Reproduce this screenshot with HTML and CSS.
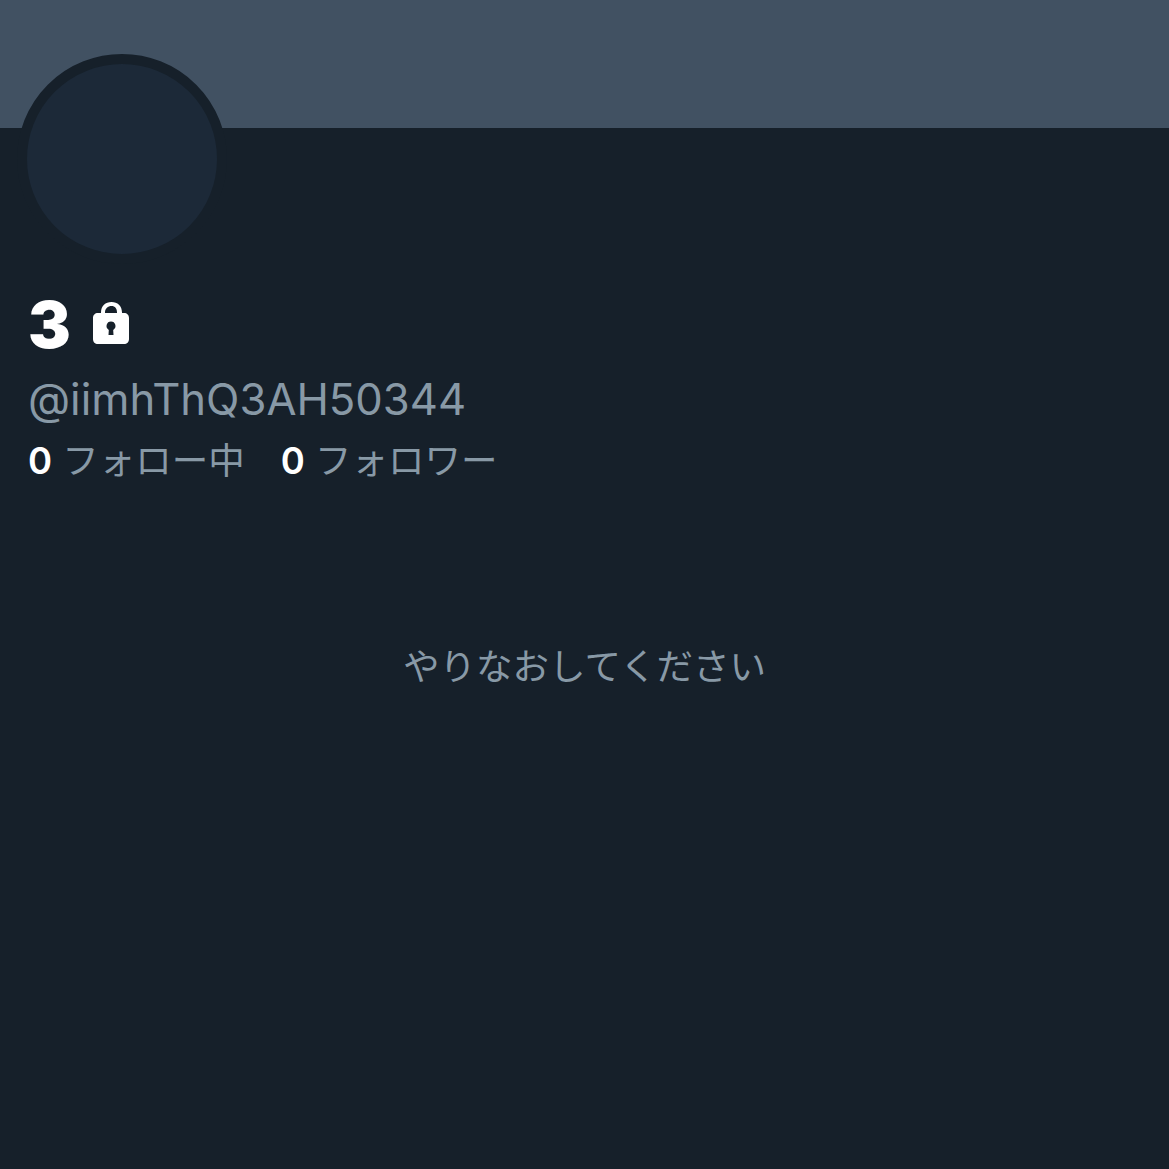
FILE: index.html
```html
<!DOCTYPE html>
<html lang="ja">
<head>
    <meta charset="UTF-8">
    <title>@iimhThQ3AH50344</title>
    <link rel="stylesheet" href="styles.css">
</head>
<body>
    <div class="banner"></div>
    <div class="profile">
        <div class="avatar"></div>
        <div class="name-row">
            <span class="name">3</span>
            <svg class="lock" viewBox="0 0 36 42" aria-hidden="true">
                <path fill-rule="evenodd" d="M8 11V10.500C8 4 12.500 0 18.500 0S29 4 29 10.500V11h2c3 0 5 2 5 5v21c0 3-2 5-5 5H5c-3 0-5-2-5-5V16c0-3 2-5 5-5zM12 11h12v-.5C24 6.500 22 4 18.500 4S12 6.500 12 10.500zM18 19.500a4.500 4.500 0 0 0-2.200 8.400L15.500 33h5l-.3-5.100A4.500 4.500 0 0 0 18 19.500z"/>
            </svg>
        </div>
        <div class="handle">@iimhThQ3AH50344</div>
        <div class="stats">
            <span class="stat"><b>0</b> フォロー中</span>
            <span class="stat"><b>0</b> フォロワー</span>
        </div>
    </div>
    <p class="message">やりなおしてください</p>
</body>
</html>
```

FILE: styles.css
```css
* {
    box-sizing: border-box;
}
body {
    margin: 0;
    height: 1169px;
    overflow: hidden;
    background: #16202a;
    color: #8899a6;
    font-family: 'Liberation Sans', 'Noto Sans CJK JP', sans-serif;
}
.banner {
    height: 128px;
    background: #415162;
}
.profile {
    padding: 0 28px;
}
.avatar {
    width: 210px;
    height: 210px;
    margin: -74px 0 0 -11px;
    border: 10px solid #16202a;
    border-radius: 50%;
    background: #1c2938;
}
.name-row {
    display: flex;
    align-items: center;
    gap: 22px;
    height: 56px;
    margin-top: 33px;
}
.name {
    color: #fff;
    font-family: 'Inter', sans-serif;
    font-size: 64px;
    font-weight: 900;
    line-height: 56px;
}
.lock {
    width: 36px;
    height: 42px;
    margin-top: -4px;
    fill: #fff;
}
.handle {
    margin-top: 22px;
    font-family: 'Inter', sans-serif;
    font-size: 43.6px;
    line-height: 50px;
}
.stats {
    display: flex;
    gap: 36px;
    margin-top: 15px;
    font-size: 36.5px;
    line-height: 42px;
}
.stat b {
    color: #fff;
    font-family: 'Inter', sans-serif;
    font-weight: 600;
}
.message {
    margin: 163px 0 0;
    text-align: center;
    font-size: 36.5px;
    line-height: 44px;
}
```
